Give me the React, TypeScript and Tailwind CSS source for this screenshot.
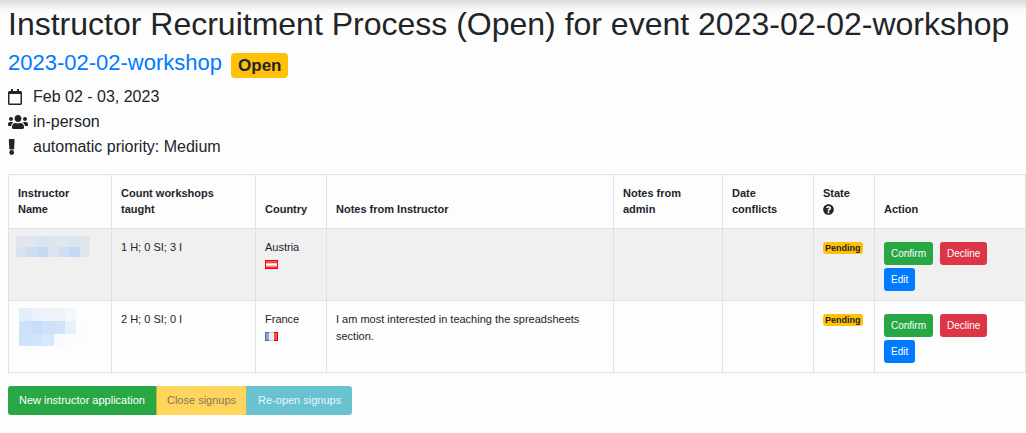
import { FaQuestionCircle, FaRegCalendar, FaUsers } from 'react-icons/fa';
import type { ReactNode } from 'react';

type Tile = [x: number, y: number, w: number, h: number, fill: string];

const tilesFirst: Tile[] = [
  [1, 0, 21, 11, '#dfe6ed'],
  [22, 0, 11, 11, '#dae4ee'],
  [33, 0, 10, 11, '#dde5ee'],
  [43, 0, 11, 11, '#e0e6ed'],
  [54, 0, 10, 11, '#dce5ee'],
  [64, 0, 11, 11, '#e0e6ee'],
  [1, 11, 11, 10, '#d7e1f0'],
  [12, 11, 11, 10, '#cdddf2'],
  [23, 11, 10, 10, '#c4daf3'],
  [33, 11, 11, 10, '#d9e4f0'],
  [44, 11, 10, 10, '#cfdef1'],
  [54, 11, 11, 10, '#c4daf3'],
  [65, 11, 10, 10, '#dee6ef'],
];

const tilesSecond: Tile[] = [
  [4, 0, 12, 13, '#e4eefa'],
  [16, 0, 11, 13, '#e9f1fa'],
  [27, 0, 23, 13, '#eef2f9'],
  [50, 0, 11, 13, '#f4f7fb'],
  [61, 9, 11, 26, '#fbfcfd'],
  [4, 13, 12, 13, '#cfe1fa'],
  [16, 13, 11, 13, '#c7ddfa'],
  [27, 13, 12, 13, '#cfe1fa'],
  [39, 13, 11, 13, '#d1e2f9'],
  [50, 13, 11, 13, '#e8f0fb'],
  [4, 26, 12, 12, '#cfe2fb'],
  [16, 26, 11, 12, '#d2e4fb'],
  [27, 26, 12, 12, '#d8e8fb'],
  [39, 26, 11, 12, '#f8fafe'],
  [50, 26, 11, 12, '#fafbfd'],
];

const rows = [
  {
    id: 1,
    tiles: tilesFirst,
    count: '1 H; 0 SI; 3 I',
    country: 'Austria',
    flag: <AustriaFlag />,
    notes: '',
  },
  {
    id: 2,
    tiles: tilesSecond,
    count: '2 H; 0 SI; 0 I',
    country: 'France',
    flag: <FranceFlag />,
    notes: 'I am most interested in teaching the spreadsheets section.',
  },
];

function HiddenName({ tiles }: { tiles: Tile[] }) {
  return (
    <svg className="-mt-1 -ml-1 block h-10 w-20" viewBox="-1 -1 80 40" shapeRendering="crispEdges" aria-hidden="true">
      {tiles.map(([x, y, w, h, fill], i) => (
        <rect key={i} x={x} y={y} width={w} height={h} fill={fill} />
      ))}
    </svg>
  );
}

function Exclamation() {
  return (
    <svg className="h-4 w-2" viewBox="0 0 8 16" fill="currentColor" aria-hidden="true">
      <path d="M1.6 0h4.2c.5 0 .8.3.8.8l-.5 8.9c0 .4-.3.7-.7.7H2c-.4 0-.7-.3-.7-.7L.8.8C.8.3 1.1 0 1.6 0z" />
      <circle cx="3.7" cy="13.5" r="2.4" />
    </svg>
  );
}

function AustriaFlag() {
  return (
    <svg className="h-[9px] w-[13px]" viewBox="0 0 13 9" shapeRendering="crispEdges" aria-hidden="true">
      <rect width="13" height="9" fill="#f00000" />
      <rect x="1" y="1" width="11" height="1" fill="#f25c5c" />
      <rect x="1" y="2" width="11" height="1" fill="#f03c3c" />
      <rect x="1" y="3" width="11" height="3" fill="#f3cccc" />
      <rect x="1" y="4" width="11" height="1" fill="#ffffff" />
      <rect x="1" y="6" width="11" height="1" fill="#f58a8a" />
      <rect x="1" y="7" width="11" height="1" fill="#f03c3c" />
    </svg>
  );
}

function FranceFlag() {
  return (
    <svg className="h-[9px] w-[13px]" viewBox="0 0 13 9" shapeRendering="crispEdges" aria-hidden="true">
      <rect width="13" height="9" fill="#c9c9c9" />
      <rect width="4" height="9" fill="#4a69b8" />
      <rect x="1" y="1" width="3" height="7" fill="#8ba5e2" />
      <rect x="4" y="1" width="5" height="7" fill="#ececec" />
      <rect x="9" width="4" height="9" fill="#e80000" />
      <rect x="9" y="1" width="3" height="7" fill="#f05050" />
    </svg>
  );
}

function Fact({ icon, children }: { icon: ReactNode; children: ReactNode }) {
  return (
    <li className="flex h-[25px] items-center">
      <span className="w-[25px] shrink-0">{icon}</span>
      {children}
    </li>
  );
}

const th = 'border border-[#dee2e6] px-[9px] pt-[10px] pb-[11px] text-left align-bottom leading-4 font-bold';
const td = 'border border-[#dee2e6] px-[9px] pt-[10px] pb-[9px] align-top leading-[17px]';
const action = 'h-[23px] rounded-[3px] px-[7px] text-[10px] leading-[21px] text-white';

export default function App() {
  return (
    <div className="min-h-screen bg-[#fdfdfd] bg-[linear-gradient(to_bottom,#d9d9d9_0px,#ebebeb_5px,#f8f8f8_10px,#fdfdfd_16px)] bg-no-repeat pl-2 font-['Liberation_Sans',Arial,sans-serif] text-base text-[#212529]">
      <h1 className="pt-1 text-[32px] leading-10">
        Instructor Recruitment Process (Open) for event 2023-02-02-workshop
      </h1>
      <h2 className="flex h-[37px] items-center gap-[9px] text-[22px] leading-7">
        <a href="#event" className="text-[#007bff]">2023-02-02-workshop</a>
        <span className="mt-[5px] rounded bg-[#ffc107] px-[7px] text-[17px] leading-[25px] font-bold">Open</span>
      </h2>
      <ul className="pt-[3px]">
        <Fact icon={<FaRegCalendar className="h-4 w-[14px]" />}>Feb 02 - 03, 2023</Fact>
        <Fact icon={<FaUsers className="h-4 w-5" />}>in-person</Fact>
        <Fact icon={<Exclamation />}>automatic priority: Medium</Fact>
      </ul>

      <table className="mt-[15px] w-full table-fixed border-collapse text-[11px]">
        <colgroup>
          <col className="w-[103px]" />
          <col className="w-36" />
          <col className="w-[71px]" />
          <col />
          <col className="w-[109px]" />
          <col className="w-[91px]" />
          <col className="w-[61px]" />
          <col className="w-[151px]" />
        </colgroup>
        <thead>
          <tr>
            <th className={th}>Instructor<br />Name</th>
            <th className={th}>Count workshops taught</th>
            <th className={th}>Country</th>
            <th className={th}>Notes from Instructor</th>
            <th className={th}>Notes from<br />admin</th>
            <th className={th}>Date<br />conflicts</th>
            <th className={th}>
              State
              <span className="flex h-4 items-center"><FaQuestionCircle className="size-[11px]" /></span>
            </th>
            <th className={th}>Action</th>
          </tr>
        </thead>
        <tbody>
          {rows.map((row) => (
            <tr key={row.id} className="h-[72px] odd:bg-[#f0f0f0]">
              <td className={td}><HiddenName tiles={row.tiles} /></td>
              <td className={td}>{row.count}</td>
              <td className={td}>
                {row.country}
                <span className="flex h-[17px] items-center">{row.flag}</span>
              </td>
              <td className={td}>{row.notes}</td>
              <td className={td} />
              <td className={td} />
              <td className={td}>
                <span className="mt-[3px] inline-block rounded-[3px] bg-[#ffc107] px-[2px] align-top text-[9px] leading-3 font-bold">
                  Pending
                </span>
              </td>
              <td className={td}>
                <div className="flex flex-wrap gap-x-[7px] gap-y-[3px] pt-[3px]">
                  <button type="button" className={`${action} bg-[#28a745]`}>Confirm</button>
                  <button type="button" className={`${action} bg-[#dc3545]`}>Decline</button>
                  <button type="button" className={`${action} bg-[#007bff]`}>Edit</button>
                </div>
              </td>
            </tr>
          ))}
        </tbody>
      </table>

      <div className="mt-[13px] flex h-[29px] text-[11px]">
        <button type="button" className="rounded-l-[3px] bg-[#28a745] px-[11px] text-white">New instructor application</button>
        <button type="button" disabled className="border-l border-[#b5b62b] bg-[#fed55d] px-[10px] text-[#83795d]">Close signups</button>
        <button type="button" disabled className="rounded-r-[3px] border-l border-[#8cbf8f] bg-[#69c2d0] px-[11px] text-[#e9f6f8]">Re-open signups</button>
      </div>
    </div>
  );
}
